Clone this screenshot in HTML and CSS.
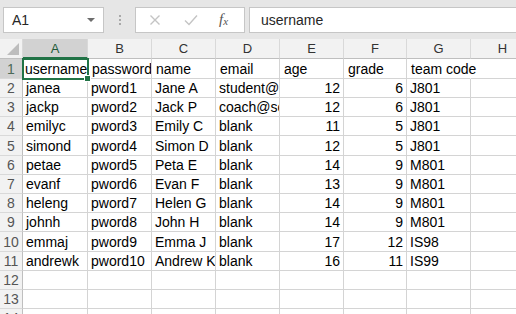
FILE: index.html
```html
<!DOCTYPE html>
<html lang="en">
<head>
  <meta charset="UTF-8">
  <meta name="viewport" content="width=device-width, initial-scale=1.0">
  <title>Book1 - Sheet1</title>
  <link rel="stylesheet" href="styles.css">
</head>
<body>
  <div class="formula-bar">
    <div class="name-box">
      <span>A1</span>
      <span class="drop-arrow"></span>
    </div>
    <div class="grip"><i></i><i></i><i></i></div>
    <div class="fx-buttons">
      <svg class="fx-icon" width="12" height="12" viewBox="0 0 12 12"><path d="M1.5 1.5 L10.5 10.5 M10.5 1.5 L1.5 10.5" stroke="#c4c4c4" stroke-width="1.4" fill="none"/></svg>
      <svg class="fx-icon" width="14" height="12" viewBox="0 0 14 12"><path d="M1 6.5 L5 10.5 L13 1.5" stroke="#c4c4c4" stroke-width="1.4" fill="none"/></svg>
      <span class="fx">f<sub>x</sub></span>
    </div>
    <div class="formula-input">username</div>
  </div>

  <table class="sheet">
    <colgroup>
      <col class="c-row">
      <col class="c-a">
      <col class="c-std"><col class="c-std"><col class="c-std"><col class="c-std">
      <col class="c-g">
      <col class="c-std">
    </colgroup>
    <thead>
      <tr>
        <th class="corner">
          <svg width="12" height="12" viewBox="0 0 12 12"><path d="M12 0 L12 12 L0 12 Z" fill="#bdbdbd"/></svg>
        </th>
        <th class="active">A</th><th>B</th><th>C</th><th>D</th><th>E</th><th>F</th><th>G</th><th>H</th>
      </tr>
    </thead>
    <tbody>
      <tr class="tall">
        <th class="active">1</th>
        <td class="selected">username</td>
        <td class="pad">password</td>
        <td class="pad">name</td>
        <td class="pad">email</td>
        <td class="pad">age</td>
        <td class="pad">grade</td>
        <td class="pad spill">team code</td>
        <td></td>
      </tr>
      <tr><th>2</th><td>janea</td><td>pword1</td><td>Jane A</td><td>student@</td><td class="num">12</td><td class="num">6</td><td>J801</td><td></td></tr>
      <tr><th>3</th><td>jackp</td><td>pword2</td><td>Jack P</td><td>coach@sc</td><td class="num">12</td><td class="num">6</td><td>J801</td><td></td></tr>
      <tr><th>4</th><td>emilyc</td><td>pword3</td><td>Emily C</td><td>blank</td><td class="num">11</td><td class="num">5</td><td>J801</td><td></td></tr>
      <tr class="tall"><th>5</th><td>simond</td><td>pword4</td><td>Simon D</td><td>blank</td><td class="num">12</td><td class="num">5</td><td>J801</td><td></td></tr>
      <tr><th>6</th><td>petae</td><td>pword5</td><td>Peta E</td><td>blank</td><td class="num">14</td><td class="num">9</td><td>M801</td><td></td></tr>
      <tr><th>7</th><td>evanf</td><td>pword6</td><td>Evan F</td><td>blank</td><td class="num">13</td><td class="num">9</td><td>M801</td><td></td></tr>
      <tr><th>8</th><td>heleng</td><td>pword7</td><td>Helen G</td><td>blank</td><td class="num">14</td><td class="num">9</td><td>M801</td><td></td></tr>
      <tr><th>9</th><td>johnh</td><td>pword8</td><td>John H</td><td>blank</td><td class="num">14</td><td class="num">9</td><td>M801</td><td></td></tr>
      <tr class="tall"><th>10</th><td>emmaj</td><td>pword9</td><td>Emma J</td><td>blank</td><td class="num">17</td><td class="num">12</td><td>IS98</td><td></td></tr>
      <tr><th>11</th><td>andrewk</td><td>pword10</td><td>Andrew K</td><td>blank</td><td class="num">16</td><td class="num">11</td><td>IS99</td><td></td></tr>
      <tr><th>12</th><td></td><td></td><td></td><td></td><td></td><td></td><td></td><td></td></tr>
      <tr><th>13</th><td></td><td></td><td></td><td></td><td></td><td></td><td></td><td></td></tr>
      <tr><th>14</th><td></td><td></td><td></td><td></td><td></td><td></td><td></td><td></td></tr>
    </tbody>
  </table>
</body>
</html>
```

FILE: styles.css
```css
body {
  margin: 0;
  font-family: "Liberation Sans", Arial, sans-serif;
  background-color: #fff;
  overflow: hidden;
  width: 516px;
  height: 314px;
}

/* top bar */
.formula-bar {
  display: flex;
  align-items: center;
  height: 39px;
  padding: 0 0 0 3px;
  box-sizing: border-box;
  background-color: #e6e6e6;
}

.name-box {
  display: flex;
  align-items: center;
  justify-content: space-between;
  width: 101px;
  height: 26px;
  box-sizing: border-box;
  padding: 0 8px 0 8px;
  background-color: #fff;
  border: 1px solid #c6c6c6;
  font-size: 14px;
  color: #262626;
}

.drop-arrow {
  width: 0;
  height: 0;
  border-left: 4px solid transparent;
  border-right: 4px solid transparent;
  border-top: 4px solid #6d6d6d;
  margin-top: 1px;
}

.grip {
  display: flex;
  flex-direction: column;
  gap: 2px;
  width: 31px;
  align-items: center;
}

.grip i {
  width: 2px;
  height: 2px;
  background-color: #a9a9a9;
}

.fx-buttons {
  display: flex;
  align-items: center;
  width: 110px;
  height: 26px;
  box-sizing: border-box;
  padding: 0 0 0 13px;
  gap: 23px;
  background-color: #fff;
  border: 1px solid #c6c6c6;
}

.fx {
  font-family: "Liberation Serif", serif;
  font-style: italic;
  font-size: 15px;
  color: #555;
  margin-left: -2px;
}

.fx sub {
  font-size: 11px;
  vertical-align: -1px;
}

.formula-input {
  flex: 1;
  height: 26px;
  margin-left: 4px;
  box-sizing: border-box;
  padding: 4px 0 0 11px;
  background-color: #fff;
  border: 1px solid #c6c6c6;
  border-right: none;
  font-size: 14px;
  color: #262626;
}

/* grid */
.sheet {
  table-layout: fixed;
  border-collapse: separate;
  border-spacing: 0;
  width: 535px;
  font-size: 14px;
}

.c-row { width: 23px; }
.c-a { width: 65px; }
.c-std { width: 64px; }
.c-g { width: 63px; }

.sheet th {
  height: 20px;
  padding: 0;
  box-sizing: border-box;
  background-color: #f2f2f2;
  border-right: 1px solid #d9d9d9;
  border-bottom: 1px solid #bfbfbf;
  font-weight: normal;
  font-size: 13px;
  color: #333;
  text-align: center;
}

.sheet tbody th {
  height: auto;
  border-bottom: 1px solid #d9d9d9;
  border-right: 1px solid #bfbfbf;
  text-align: center;
  font-size: 14px;
  color: #555;
}

.sheet th.corner {
  text-align: right;
  vertical-align: bottom;
  padding: 0 3px 3px 0;
  line-height: 0;
}

.sheet thead th.active {
  background-color: #d2d2d2;
  border-bottom: 2px solid #217346;
  color: #1e5a38;
}

.sheet tbody th.active {
  background-color: #d2d2d2;
  color: #4c6a58;
}

.sheet tbody tr {
  height: 19px;
}

.sheet tbody tr.tall {
  height: 20px;
}

.sheet td {
  padding: 0 3px;
  box-sizing: border-box;
  border-right: 1px solid #d4d4d4;
  border-bottom: 1px solid #d4d4d4;
  white-space: nowrap;
  overflow: hidden;
  color: #000;
  vertical-align: bottom;
  line-height: 17px;
}

.sheet td.pad {
  padding-left: 4px;
}

.sheet td.num {
  text-align: right;
}

.sheet td.spill {
  overflow: visible;
  border-right-color: transparent;
}

.sheet td.selected {
  position: relative;
  overflow: visible;
  padding-left: 2px;
  outline: 2px solid #217346;
  outline-offset: -1px;
}

.sheet td.selected::after {
  content: "";
  position: absolute;
  right: -4px;
  bottom: -4px;
  width: 5px;
  height: 5px;
  background-color: #217346;
  border: 1px solid #fff;
}
```
